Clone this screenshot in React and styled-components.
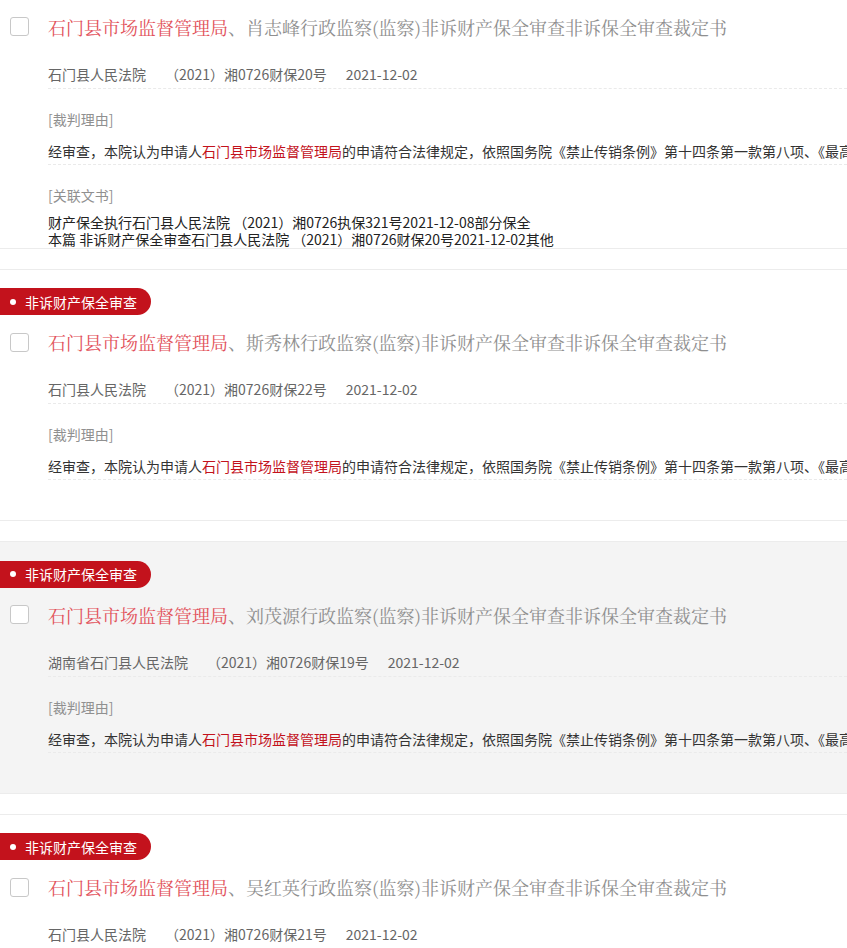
import React from 'react';
import styled, { createGlobalStyle } from 'styled-components';

const GlobalStyle = createGlobalStyle`
  html, body {
    margin: 0;
    padding: 0;
    background: #fff;
    overflow: hidden;
  }
  body {
    font-family: "Noto Sans CJK SC", "Noto Sans", sans-serif;
  }
`;

const reasonText =
  '的申请符合法律规定，依照国务院《禁止传销条例》第十四条第一款第八项、《最高人民法院关于执行〈中华人民共和国行政诉讼法〉若干问题的解释》第九十四条之规定，裁定如下';

const items = [
  {
    tag: null,
    person: '肖志峰',
    court: '石门县人民法院',
    caseNo: '（2021）湘0726财保20号',
    date: '2021-12-02',
    related: [
      '财产保全执行石门县人民法院 （2021）湘0726执保321号2021-12-08部分保全',
      '本篇 非诉财产保全审查石门县人民法院 （2021）湘0726财保20号2021-12-02其他',
    ],
  },
  {
    tag: '非诉财产保全审查',
    person: '斯秀林',
    court: '石门县人民法院',
    caseNo: '（2021）湘0726财保22号',
    date: '2021-12-02',
  },
  {
    tag: '非诉财产保全审查',
    person: '刘茂源',
    court: '湖南省石门县人民法院',
    caseNo: '（2021）湘0726财保19号',
    date: '2021-12-02',
    active: true,
  },
  {
    tag: '非诉财产保全审查',
    person: '吴红英',
    court: '石门县人民法院',
    caseNo: '（2021）湘0726财保21号',
    date: '2021-12-02',
  },
];

export default function App() {
  return (
    <>
      <GlobalStyle />
      <List>
        {items.map((item, i) => (
          <Item key={i} $active={item.active} $hasRelated={!!item.related}>
            <Tag $hidden={!item.tag}>
              <Dot />
              {item.tag || '非诉财产保全审查'}
            </Tag>
            <TitleRow>
              <Checkbox />
              <Title>
                <Red>石门县市场监督管理局</Red>、{item.person}行政监察(监察)非诉财产保全审查非诉保全审查裁定书
              </Title>
            </TitleRow>
            <Meta>
              <span>{item.court}</span>
              <span>{item.caseNo}</span>
              <span>{item.date}</span>
            </Meta>
            <Section>
              <Label>[裁判理由]</Label>
              <Reason>
                经审查，本院认为申请人<Strong>石门县市场监督管理局</Strong>
                {reasonText}
              </Reason>
            </Section>
            {item.related && (
              <Section>
                <Label>[关联文书]</Label>
                <Related>
                  {item.related.map((r, j) => (
                    <div key={j}>{r}</div>
                  ))}
                </Related>
              </Section>
            )}
          </Item>
        ))}
      </List>
    </>
  );
}

const List = styled.div`
  margin-top: -47px;
  width: 847px;
  overflow: hidden;
`;

const Item = styled.div`
  border-top: 1px solid #ececec;
  border-bottom: 1px solid #ececec;
  background: ${(p) => (p.$active ? '#f4f4f4' : '#fff')};
  padding: 16px 0 ${(p) => (p.$hasRelated ? 0 : 40)}px;
  margin-bottom: 20px;
`;

const Tag = styled.div`
  display: inline-flex;
  align-items: center;
  height: 27px;
  padding: 0 14px 0 10px;
  background: #c3121c;
  color: #fff;
  font-size: 14px;
  border-radius: 0 14px 14px 0;
  visibility: ${(p) => (p.$hidden ? 'hidden' : 'visible')};
`;

const Dot = styled.span`
  width: 6px;
  height: 6px;
  border-radius: 50%;
  background: #fff;
  margin-right: 9px;
`;

const TitleRow = styled.div`
  display: flex;
  align-items: center;
  height: 28px;
  margin-top: 13px;
  white-space: nowrap;
`;

const Checkbox = styled.span`
  box-sizing: border-box;
  width: 19px;
  height: 19px;
  margin: 0 19px 0 10px;
  border: 1px solid #c8c8c8;
  border-radius: 3px;
  background: #fff;
  flex-shrink: 0;
`;

const Title = styled.div`
  font-size: 18px;
  color: #8f8f8f;
  font-family: "Noto Serif CJK SC", "Noto Sans CJK SC", serif;
`;

const Red = styled.span`
  color: #e2515a;
`;

const Meta = styled.div`
  display: flex;
  gap: 19px;
  margin: 23px 0 0 48px;
  padding-bottom: 4px;
  border-bottom: 1px dashed #eaeaea;
  font-size: 14px;
  line-height: 20px;
  color: #666;
  white-space: nowrap;
`;

const Section = styled.div`
  margin: 20px 0 0 48px;
`;

const Label = styled.div`
  font-size: 14px;
  line-height: 20px;
  color: #909090;
`;

const Reason = styled.div`
  margin-top: 12px;
  padding-bottom: 3px;
  border-bottom: 1px dashed #eaeaea;
  font-size: 14px;
  line-height: 20px;
  color: #333;
  white-space: nowrap;
  overflow: hidden;
`;

const Strong = styled.span`
  color: #c3121c;
`;

const Related = styled.div`
  margin-top: 9px;
  font-size: 14px;
  line-height: 17px;
  color: #222;
  white-space: nowrap;
`;
